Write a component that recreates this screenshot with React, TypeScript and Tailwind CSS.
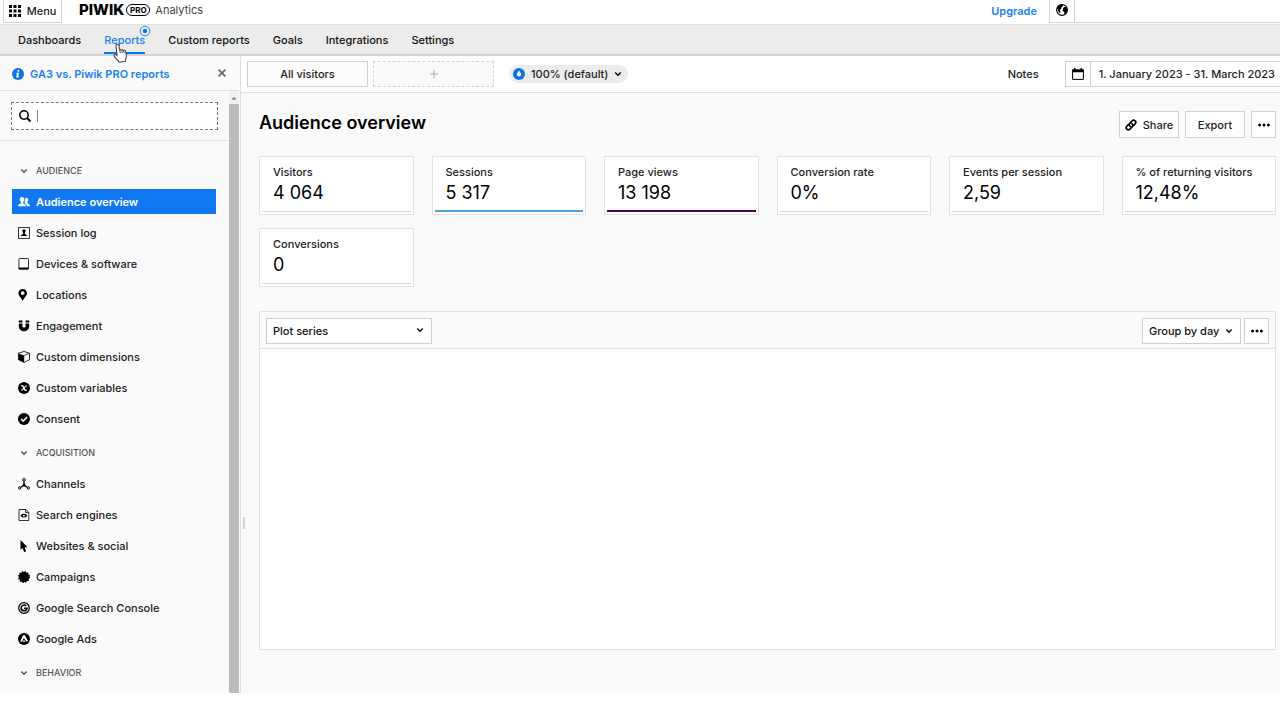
import React from 'react';

interface IconProps {
  className?: string;
}

const Svg: React.FC<React.PropsWithChildren<IconProps>> = ({ className = 'size-3', children }) => (
  <svg viewBox="0 0 12 12" fill="currentColor" aria-hidden="true" className={`shrink-0 ${className}`}>
    {children}
  </svg>
);

const UsersIcon = () => (
  <Svg>
    <path d="M4 .9c1.600 0 2.300 1.200 2.200 2.600C6.100 4.800 5.500 5.600 5.200 6v1.200c.1.700 2.700.9 2.700 3.100H0c0-2.200 2.700-2.400 2.800-3.100V6C2.400 5.600 1.900 4.800 1.800 3.500 1.700 2.100 2.500.9 4 .9z" />
    <path d="M8.400 1.800c1.300 0 2 1 1.900 2.200-.1 1-.5 1.600-.9 2v1c.2.700 2.600.9 2.600 3.300H8.700C8.600 8.300 7.700 7.700 6.600 7.200 7 6.800 7.100 6.200 6.700 5c-.2-1.900.4-3.200 1.700-3.200z" />
  </Svg>
);

const SessionIcon = () => (
  <Svg>
    <path fill="none" stroke="currentColor" strokeWidth=".8" d="M.5.500h11v11H.500z" />
    <path d="M6 2.200c1.200 0 1.700.9 1.600 1.900C7.500 5 7.100 5.500 6.900 5.800v.9c.2.500 2.100.6 2.100 2.300H3c0-1.700 1.900-1.800 2.100-2.300v-.9C4.800 5.500 4.500 5 4.400 4.100 4.300 3.100 4.800 2.200 6 2.200z" />
  </Svg>
);

const DeviceIcon = () => (
  <Svg>
    <rect x=".9" y=".5" width="9.600" height="10.600" rx=".8" fill="none" stroke="currentColor" strokeWidth=".8" />
    <path d="M.8 9.500h9.800v1.900H.8z" />
  </Svg>
);

const PinIcon = () => (
  <Svg>
    <path fillRule="evenodd" d="M4.700 0C2.300 0 .4 1.800.4 4.100c0 2.700 2.800 4.700 4.300 7.900 1.500-3.200 4.300-5.200 4.300-7.900C9 1.800 7.100 0 4.700 0zm0 2.200a1.900 1.900 0 1 1 0 3.800 1.900 1.900 0 0 1 0-3.800z" />
  </Svg>
);

const MagnetIcon = () => (
  <Svg>
    <path d="M.8.500h3.600v2H.8zM7.600.500h3.600v2H7.600z" />
    <path d="M.8 3.500h3.600v2.400c0 2.200 3.200 2.200 3.200 0V3.500h3.600v2.600c0 7-10.400 7-10.400 0z" />
  </Svg>
);

const CubeIcon = () => (
  <Svg>
    <path fill="none" stroke="currentColor" strokeWidth=".8" strokeLinejoin="round" d="M6 .5l5.500 1.700v6.500L6 11.500.5 8.700V2.200z" />
    <path d="M.5 2.400L6.200 4.500v7L.5 8.800z" />
    <path fill="none" stroke="currentColor" strokeWidth=".7" d="M6.200 4.500l5.300-2.200" />
  </Svg>
);

const VariableIcon = () => (
  <Svg>
    <circle cx="6" cy="6" r="6" />
    <path fill="none" stroke="#fff" strokeWidth="1.400" d="M3.200 3.900c1.400-.6 1.900.2 2.600 2.100S7.200 8.700 8.800 8.100" />
    <path fill="none" stroke="#fff" strokeWidth="1.100" d="M8.700 3.700C7.300 3.700 4.800 8.300 3.300 8.300" />
  </Svg>
);

const CheckIcon = () => (
  <Svg>
    <circle cx="6" cy="6" r="6" />
    <path fill="none" stroke="#fff" strokeWidth="1.500" d="M3.100 5.900l2.100 2.200 3.900-4.100" />
  </Svg>
);

const ChannelsIcon = () => (
  <Svg>
    <g fill="none" stroke="currentColor" strokeWidth="1">
      <circle cx="6" cy="1.900" r="1.300" />
      <circle cx="1.700" cy="9.900" r="1.200" />
      <circle cx="10.300" cy="9.900" r="1.200" />
      <path strokeWidth="1.300" d="M6 3.200v4L2.700 9.200M6 7.200l3.300 2" />
    </g>
    <circle cx="6" cy="7.200" r="1.400" />
  </Svg>
);

const SearchEngineIcon = () => (
  <Svg>
    <path fill="none" stroke="currentColor" strokeWidth=".8" d="M1 .5h6.800l3 3v8H1zM7.700.500v3.100h3.100" />
    <path fillRule="evenodd" d="M2.500 6.700c1.600-2.500 5.200-2.500 6.800 0-1.600 2.400-5.200 2.400-6.800 0zm3.400-1a1 1 0 1 0 0 2 1 1 0 0 0 0-2z" />
  </Svg>
);

const PointerIcon = () => (
  <Svg>
    <path d="M2.500 0v9.800l2-1.700 1.700 3.900 2-.8-1.700-3.900h3z" />
  </Svg>
);

const CampaignIcon = () => (
  <Svg>
    <circle cx="6" cy="6" r="5.200" />
    <circle cx="6" cy="6" r="5.200" fill="none" stroke="currentColor" strokeWidth="1.600" strokeDasharray="1.360 1.360" />
  </Svg>
);

const GoogleIcon = () => (
  <Svg>
    <circle cx="6" cy="6" r="5.300" fill="none" stroke="currentColor" strokeWidth="1.300" />
    <path fill="none" stroke="currentColor" strokeWidth="1.600" d="M8.300 3.800C5.900 2 3.100 3.700 3.200 6.100c.1 3.200 5.200 3.700 5.700.2H6" />
  </Svg>
);

const AdsIcon = () => (
  <Svg>
    <circle cx="6" cy="6" r="6" />
    <path fill="#fff" d="M5 2.200h1.900l3 5.500-1.500 1L5.800 5 4 8.700H2.200z" />
    <circle cx="6" cy="8.200" r=".9" fill="#fff" />
  </Svg>
);

const Chevron: React.FC<IconProps> = ({ className = 'size-2' }) => (
  <svg viewBox="0 0 8 8" fill="none" stroke="currentColor" strokeWidth="1.500" aria-hidden="true" className={`shrink-0 ${className}`}>
    <path d="M1.300 2.500L4 5.200l2.700-2.700" />
  </svg>
);

const Dots = () => (
  <svg viewBox="0 0 12 4" fill="#000" aria-hidden="true" className="w-3 h-1">
    <circle cx="1.600" cy="2" r="1.500" />
    <circle cx="6" cy="2" r="1.500" />
    <circle cx="10.400" cy="2" r="1.500" />
  </svg>
);

const navItems = ['Dashboards', 'Reports', 'Custom reports', 'Goals', 'Integrations', 'Settings'];

const sections = [
  {
    title: 'Audience',
    items: [
      { label: 'Audience overview', icon: <UsersIcon />, active: true },
      { label: 'Session log', icon: <SessionIcon /> },
      { label: 'Devices & software', icon: <DeviceIcon /> },
      { label: 'Locations', icon: <PinIcon /> },
      { label: 'Engagement', icon: <MagnetIcon /> },
      { label: 'Custom dimensions', icon: <CubeIcon /> },
      { label: 'Custom variables', icon: <VariableIcon /> },
      { label: 'Consent', icon: <CheckIcon /> },
    ],
  },
  {
    title: 'Acquisition',
    items: [
      { label: 'Channels', icon: <ChannelsIcon /> },
      { label: 'Search engines', icon: <SearchEngineIcon /> },
      { label: 'Websites & social', icon: <PointerIcon /> },
      { label: 'Campaigns', icon: <CampaignIcon /> },
      { label: 'Google Search Console', icon: <GoogleIcon /> },
      { label: 'Google Ads', icon: <AdsIcon /> },
    ],
  },
  { title: 'Behavior', items: [] },
];

const metrics = [
  { label: 'Visitors', value: '4 064', line: 'h-px bg-[#d8d8d8]' },
  { label: 'Sessions', value: '5 317', line: 'h-0.5 bg-[#4aa3df]' },
  { label: 'Page views', value: '13 198', line: 'h-0.5 bg-[#520052]' },
  { label: 'Conversion rate', value: '0%', line: 'h-px bg-[#d8d8d8]' },
  { label: 'Events per session', value: '2,59', line: 'h-px bg-[#d8d8d8]' },
  { label: '% of returning visitors', value: '12,48%', line: 'h-px bg-[#d8d8d8]' },
  { label: 'Conversions', value: '0', line: 'h-px bg-[#d8d8d8]' },
];

const TopBar = () => (
  <header className="h-[25px] flex items-start bg-white border-b border-[#dedede]">
    <button className="ml-[3px] h-[23px] w-[59px] flex items-center justify-center gap-1.5 border border-t-0 border-[#d4d4d4] text-[#222]">
      <svg viewBox="0 0 12 12" fill="#000" aria-hidden="true" className="size-3">
        <path d="M0 0h3v3H0zM4.500 0h3v3h-3zM9 0h3v3H9zM0 4.500h3v3H0zM4.500 4.500h3v3h-3zM9 4.500h3v3H9zM0 9h3v3H0zM4.500 9h3v3h-3zM9 9h3v3H9z" />
      </svg>
      Menu
    </button>
    <a href="#home" className="ml-[17px] h-5 flex items-center">
      <span className="text-[15px] font-extrabold text-black">PIWIK</span>
      <span className="ml-0.5 w-6 h-3 flex items-center justify-center rounded-full border border-black text-[8px] leading-none font-bold text-black">PRO</span>
      <span className="ml-[5px] font-normal text-[#444]">Analytics</span>
    </a>
    <a href="#upgrade" className="ml-auto mr-3 h-[22px] flex items-center font-semibold text-[#1a80ee]">Upgrade</a>
    <button aria-label="Language" className="w-[26px] h-[23px] flex items-start justify-center pt-1 border border-t-0 border-[#d4d4d4]">
      <svg viewBox="0 0 12 12" aria-hidden="true" className="size-3">
        <circle cx="6" cy="6" r="5.400" fill="#fff" stroke="#000" strokeWidth="1.100" />
        <path d="M1 4c.8-2.200 2.600-3.500 5.200-3.400L7 2 5.500 3.200 5.300 5 3.700 5.400 4.500 7l-.3 2.500L2.600 8zM8 3l2.800.1.700 3.200-1.600 3.200-1.800.4.200-2L6.600 7 7 4.700z" />
      </svg>
    </button>
    <div className="w-[205px] h-[23px] border-b border-[#d4d4d4]" />
  </header>
);

const HandCursor = () => (
  <svg viewBox="0 0 16 20" aria-hidden="true" className="absolute z-10 left-[9px] top-[18px] w-4 h-5">
    <path
      d="M3.700 1.500c1-.6 1.900 0 2.100.9L6.700 7c.4-.8 1.600-.7 1.900.2.500-.8 1.700-.6 2 .4.600-.7 1.700-.4 1.900.6l.8 3.600c.3 1.900-.1 3.400-.7 4.700l-.3 1.800-6.100.9-1-1.600c-1.700-1.100-2.700-2.700-4-4.400-.6-.9.200-2 1.300-1.600l1.600 1L3 3.300c-.2-.8 0-1.400.7-1.800z"
      fill="#fff"
      stroke="#444"
      strokeWidth="1.100"
      strokeLinejoin="round"
    />
    <path d="M6.800 7.200l.6 3M8.800 7.500l.5 2.500M10.700 8l.4 2" fill="none" stroke="#444" strokeWidth=".9" />
  </svg>
);

const MainNav = () => (
  <nav className="h-[31px] flex gap-[23px] pl-[18px] bg-[#ececec] border-b-2 border-[#d4d4d4]">
    {navItems.map((item) => (
      <div key={item} className="relative flex">
        <a
          href={`#${item}`}
          className={`h-[29px] flex items-center pt-[3px] border-b-2 ${item === 'Reports' ? 'text-[#1a80ee] border-[#0b78ee]' : 'text-[#111] border-transparent'}`}
        >
          {item}
        </a>
        {item === 'Reports' && (
          <>
            <svg viewBox="0 0 12 12" aria-hidden="true" className="absolute -right-1.5 top-0 size-3">
              <circle cx="6" cy="6" r="4.800" fill="#e8f2fd" stroke="#2c86e6" strokeWidth="1" />
              <circle cx="6" cy="6" r="2.200" fill="#0b78ee" />
            </svg>
            <HandCursor />
          </>
        )}
      </div>
    ))}
  </nav>
);

const Sidebar = () => (
  <aside className="w-[241px] shrink-0 border-r border-[#dedede] flex flex-col">
    <div className="h-[35px] px-3 pt-0.5 flex items-center border-b border-[#e2e2e2]">
      <svg viewBox="0 0 12 12" aria-hidden="true" className="size-3">
        <circle cx="6" cy="6" r="6" fill="#0b73ea" />
        <path d="M5.700 2h1.700L7 3.700H5.300zM4.700 4.700h2.400L6.300 8h.6l-.3 1.500H4.100L4.900 6h-.5z" fill="#fff" />
      </svg>
      <a href="#ga3" className="ml-1.5 font-semibold text-[#1a80ee]">GA3 vs. Piwik PRO reports</a>
      <button aria-label="Close" className="ml-auto">
        <svg viewBox="0 0 12 12" fill="none" stroke="#666" strokeWidth="1.700" aria-hidden="true" className="size-3">
          <path d="M2.600 1.600l6.800 6.800M9.400 1.600L2.600 8.400" />
        </svg>
      </button>
    </div>
    <div className="flex flex-1">
      <div className="flex-1">
        <div className="px-[11px] pt-[11px] pb-2.5 border-b border-[#e2e2e2]">
          <label className="h-7 px-[7px] flex items-center bg-white border border-dashed border-[#777]">
            <svg viewBox="0 0 12 12" fill="none" stroke="#000" strokeWidth="1.500" aria-hidden="true" className="size-3 shrink-0">
              <circle cx="5" cy="5" r="4.200" />
              <path d="M8 8l3.500 3.500" strokeWidth="2" />
            </svg>
            <span className="ml-1.5 w-px h-3 shrink-0 bg-[#888]" />
            <input type="text" aria-label="Search reports" className="w-full min-w-0 px-1 outline-none" />
          </label>
        </div>
        <div className="flex flex-col gap-2.5 px-3 pt-[18px] pb-[7px]">
          {sections.map((section) => (
            <section key={section.title} className="flex flex-col gap-1.5">
              <button className="h-6 pl-2 flex items-center gap-2 text-[9px] uppercase text-[#555]">
                <Chevron />
                {section.title}
              </button>
              {section.items.map((item) => (
                <a
                  key={item.label}
                  href={`#${item.label}`}
                  className={`h-[25px] pl-1.5 mr-px flex items-center gap-1.5 ${item.active ? 'bg-[#0f78f0] text-white font-semibold' : 'text-[#222]'}`}
                >
                  <span className={item.active ? 'text-white' : 'text-black'}>{item.icon}</span>
                  {item.label}
                </a>
              ))}
            </section>
          ))}
        </div>
      </div>
      {/* Scroll track */}
      <div className="w-2.5 mr-px flex flex-col bg-[#f1f1f1]">
        <svg viewBox="0 0 10 13" aria-hidden="true" className="w-2.5 h-[13px]">
          <path d="M2.500 8.500L5 6l2.500 2.500z" fill="#777" />
        </svg>
        <div className="flex-1 bg-[#bcbcbc]" />
      </div>
    </div>
  </aside>
);

const Toolbar = () => (
  <div className="h-[37px] pl-1.5 flex items-center bg-white border-b border-[#dedede] text-[#222]">
    <button className="w-[121px] h-[26px] bg-[#fcfcfc] border border-[#d0d0d0]">All visitors</button>
    <button aria-label="Add segment" className="ml-[5px] w-[121px] h-[26px] flex items-center justify-center bg-[#fafafa] border border-dashed border-[#d4d4d4]">
      <svg viewBox="0 0 8 8" stroke="#aaa" strokeWidth="1" aria-hidden="true" className="size-2">
        <path d="M4 0v8M0 4h8" />
      </svg>
    </button>
    <button className="ml-[15px] h-[18px] px-1 flex items-center rounded-full bg-[#ececec]">
      <svg viewBox="0 0 12 12" aria-hidden="true" className="size-3">
        <circle cx="6" cy="6" r="6" fill="#0b73ea" />
        <path d="M6 2.400c1.200 1.700 2.100 2.700 2.100 4a2.100 2.100 0 0 1-4.200 0c0-1.300.9-2.300 2.100-4z" fill="#fff" />
      </svg>
      <span className="ml-1.5 mr-1.5">100% (default)</span>
      <Chevron className="size-2 mr-0.5 text-black" />
    </button>
    <button className="ml-auto">Notes</button>
    <button className="ml-[26px] h-[26px] flex items-center bg-white border border-r-0 border-[#d0d0d0]">
      <span className="w-[25px] h-full flex items-center justify-center border-r border-[#d0d0d0]">
        <svg viewBox="0 0 12 12" aria-hidden="true" className="size-3">
          <path d="M.6 2h10.800v9.400H.6z" fill="none" stroke="#000" strokeWidth="1" />
          <path d="M.2 1.500h11.600v2.700H.2zM2 0h1.500v2H2zM8.500 0H10v2H8.500z" />
        </svg>
      </span>
      <span className="pl-2 pr-[5px]">1. January 2023 - 31. March 2023</span>
    </button>
  </div>
);

const MetricCard: React.FC<(typeof metrics)[number]> = ({ label, value, line }) => (
  <div className="h-[59px] px-0.5 pb-0.5 flex flex-col bg-white border border-[#e2e2e2]">
    <p className="px-[11px] pt-[7px] text-[#222] whitespace-nowrap">{label}</p>
    <p className="px-[11px] text-lg leading-[26px] font-normal text-black">{value}</p>
    <div className={`mt-auto ${line}`} />
  </div>
);

const Overview = () => (
  <main className="pl-[18px] pr-1 pt-[18px] pb-[43px]">
    <div className="flex items-center h-[27px]">
      <h1 className="-mt-1 text-lg leading-6 font-semibold text-black">Audience overview</h1>
      <div className="ml-auto flex gap-1.5 text-[#222]">
        <button className="w-[60px] h-[27px] flex items-center justify-center gap-1.5 bg-white border border-[#d0d0d0]">
          <svg viewBox="0 0 12 12" fill="none" stroke="#000" strokeWidth="1.700" strokeLinecap="round" aria-hidden="true" className="size-3">
            <path d="M5.100 7.300C3.900 6.300 4 5 4.900 4.100l2.200-2.300c2-1.900 5 .9 3.100 3L8.700 6.400" />
            <path d="M6.900 4.700c1.200 1 1.100 2.300.2 3.200l-2.200 2.300c-2 1.900-5-.9-3.100-3l1.500-1.600" />
          </svg>
          Share
        </button>
        <button className="w-[60px] h-[27px] bg-white border border-[#d0d0d0]">Export</button>
        <button aria-label="More" className="w-[25px] h-[27px] flex items-center justify-center bg-white border border-[#d0d0d0]">
          <Dots />
        </button>
      </div>
    </div>

    <div className="mt-[18px] grid grid-cols-6 gap-x-[18px] gap-y-[13px]">
      {metrics.map((metric) => (
        <MetricCard key={metric.label} {...metric} />
      ))}
    </div>

    <section className="mt-6 border border-[#e2e2e2]">
      <div className="h-[37px] px-1.5 pb-1 flex items-end border-b border-[#e2e2e2] text-[#111]">
        <div className="relative w-[166px]">
          <select aria-label="Plot series" className="block w-full h-[26px] pl-1.5 appearance-none bg-white border border-[#d0d0d0]">
            <option>Plot series</option>
          </select>
          <Chevron className="size-2 absolute right-2 top-2 pointer-events-none" />
        </div>
        <div className="relative ml-auto w-[99px]">
          <select aria-label="Group by" className="block w-full h-[26px] pl-1.5 appearance-none bg-white border border-[#d0d0d0]">
            <option>Group by day</option>
          </select>
          <Chevron className="size-2 absolute right-2 top-[9px] pointer-events-none" />
        </div>
        <button aria-label="Chart options" className="ml-[3px] w-[25px] h-[26px] flex items-center justify-center bg-white border border-[#d0d0d0]">
          <Dots />
        </button>
      </div>
      <div className="h-[300px] bg-white" />
    </section>
  </main>
);

export default function App() {
  return (
    <div className="min-h-screen bg-white font-['Inter',sans-serif] text-[11px] leading-4 font-medium">
      <TopBar />
      <MainNav />
      <div className="flex bg-[#fafafa]">
        <Sidebar />
        <div className="relative flex-1 min-w-0">
          <Toolbar />
          <Overview />
          {/* Sidebar resize handle */}
          <div className="absolute left-0.5 top-[461px] w-0.5 h-3 bg-[#d4d4d4]" />
        </div>
      </div>
    </div>
  );
}
